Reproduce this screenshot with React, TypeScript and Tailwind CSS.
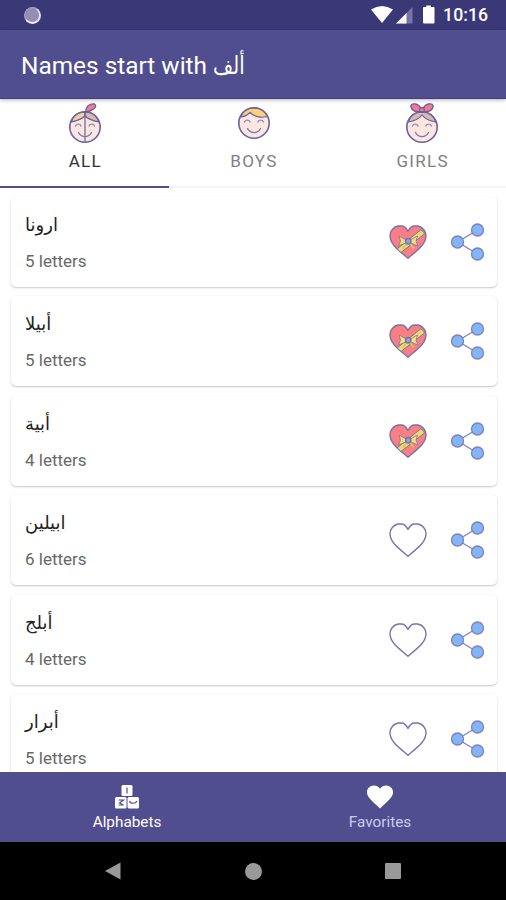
import React, { useState } from "react";

const names = [
  { name: "ارونا", letters: 5, liked: true },
  { name: "أبيلا", letters: 5, liked: true },
  { name: "أبية", letters: 4, liked: true },
  { name: "ابيلين", letters: 6, liked: false },
  { name: "أبلج", letters: 4, liked: false },
  { name: "أبرار", letters: 5, liked: false },
];

const tabs = ["ALL", "BOYS", "GIRLS"];

function Face({ type }: { type: string }) {
  return (
    <svg viewBox="0 0 36 42" width="36" height="42" fill="none" stroke="#6662a5" strokeWidth="1.6" strokeLinecap="round" strokeLinejoin="round">
      <circle cx="18" cy="25" r="15.2" fill="#fbe7e0" stroke="none" />
      {type === "BOYS" && (
        <path d="M4.500 19C7 13 12 10 18 10s11 3 13.500 8.500c-5 1.500-12.500 1-17.500-4-3 3-5 4-9.500 4.500z" fill="#fad07b" strokeWidth="1.2" />
      )}
      {type === "ALL" && (
        <>
          <path d="M4.200 20C6 14 11 10 18 10v4c-4 4-9 5-13.800 6z" fill="#f1d09a" strokeWidth="1.2" />
          <path d="M18 10c7 0 12 4 13.800 10C27 19 22 18 18 14z" fill="#dcb9aa" strokeWidth="1.2" />
          <path d="M18 10v30" strokeWidth="1.2" />
          <path d="M18.500 10c0-5 3.500-8.500 9-8 1.800 1 1.500 3-.5 4.500-2 2-4 3-8.500 3.500z" fill="#f9798c" strokeWidth="1.3" />
        </>
      )}
      {type === "GIRLS" && (
        <>
          <path d="M4.200 20C6 14 11 10 18 10s12 4 13.800 10C26 19 21 17 18 13c-3 4-8 6-13.800 7z" fill="#d9b9ad" strokeWidth="1.2" />
          <path d="M17 9.500C11 10.500 7 8 6.800 3.700 8 .8 14 1 17 6.500zM19 9.500c6 1 10-1.500 10.200-5.800C28 .8 22 1 19 6.500z" fill="#f9798c" strokeWidth="1.3" />
          <circle cx="18" cy="8" r="2.4" fill="#f9798c" strokeWidth="1.1" />
        </>
      )}
      <circle cx="18" cy="25" r="15.2" />
      <path d="M8.500 24c1-2.500 4.500-2.500 5.500 0M22 24c1-2.500 4.500-2.500 5.500 0" stroke="#9889b3" strokeWidth="1.4" />
      <path d="M11.500 30.500c3 5.500 10 5.500 13 0" stroke="#8174ad" strokeWidth="1.4" />
    </svg>
  );
}

function Heart({ liked }: { liked: boolean }) {
  return (
    <svg viewBox="0 0 40 36" width="40" height="36" fill="none" stroke="#7773ae" strokeWidth="1.4" strokeLinejoin="round">
      <path
        d="M20 7.500C18.500 4.500 16.500 2 13.500 2H10C5.500 3 2 7 2 11.500c0 4 1.500 7 4 10C9.500 25.800 15 30 20 34.200c5-4.200 10.500-8.400 14-12.700 2.500-3 4-6 4-10C38 7 34.500 3 30 2h-3.500c-3 0-5 2.500-6.500 5.500z"
        fill={liked ? "#fb7f82" : "none"}
      />
      {liked && (
        <>
          <path d="M9 25L32.500 6c2 .5 3.500 2.300 4 4L13 28.500z" fill="#eedb65" strokeWidth="1" />
          <path d="M19 16.500l-8-4.500 1.500 5.200L10.500 22l8.500-3.500zM21.500 16.500l8-4.500-1.500 5.200 2 4.800-8.500-3.500z" fill="#f5e07a" strokeWidth="0.8" />
          <path d="M18.500 19l-3.500 6M22 19l3.500 5.500" stroke="#d8c46a" strokeWidth="1.6" />
          <circle cx="20.200" cy="17.200" r="2.700" fill="#91a5d2" strokeWidth="1.500" />
        </>
      )}
    </svg>
  );
}

function Share() {
  return (
    <svg viewBox="0 0 36 40" width="36" height="40" fill="#82b5fa" stroke="#7f80b8" strokeWidth="1.3">
      <path d="M7.500 20L27.500 8M7.500 20l20 12" fill="none" />
      <circle cx="27.500" cy="8" r="6" />
      <circle cx="7.500" cy="20" r="6" />
      <circle cx="27.500" cy="32" r="6" />
    </svg>
  );
}

function StatusBar() {
  return (
    <div className="flex h-[30px] shrink-0 items-center bg-[#3b3878] pl-6 pr-[18px] text-white">
      <div className="h-[17px] w-[17px] rounded-full border border-b-2 border-r-2 border-[#a5a3c2] border-b-[#f1f0f5] border-r-[#e1e0ea] bg-[#918fb4]" />
      <svg viewBox="0 0 66 22" width="66" height="22" className="ml-auto" fill="#fff">
        <path d="M0 5.500Q11-1.500 22 5.500L11 19z" />
        <path d="M41.500 3V19.500H25z" fill="#7773a5" />
        <path d="M35.500 9V19.500H25z" />
        <path d="M53 3h2.200V1.500h4.600V3H62.500q1 0 1 1V18.500q0 1-1 1h-9.500q-1 0-1-1V4q0-1 1-1z" />
      </svg>
      <span className="ml-[6px] mt-[2px] text-[17.7px] font-medium leading-none">10:16</span>
    </div>
  );
}

function App() {
  const [activeTab, setActiveTab] = useState("ALL");
  const [liked, setLiked] = useState(names.map((item) => item.liked));

  const onLikeHandler = (index: number) => {
    setLiked(liked.map((value, i) => (i === index ? !value : value)));
  };

  return (
    <div className="flex h-[900px] w-[506px] flex-col overflow-hidden bg-white font-[Roboto,'DejaVu_Sans',sans-serif]">
      <StatusBar />
      <header className="z-10 flex h-[69px] shrink-0 items-center border-b border-[#403d80] bg-[#504e8e] pl-[21px] pt-1 text-[24.4px] text-white shadow-[0_1px_4px_rgba(0,0,0,0.3)]">
        <h1 className="whitespace-nowrap leading-8">
          Names start with <span className="inline-block origin-left scale-x-[0.8]">ألف</span>
        </h1>
      </header>

      <div className="flex h-[89px] shrink-0 border-b-2 border-[#f3f3f5]">
        {tabs.map((tab) => (
          <button
            key={tab}
            type="button"
            onClick={() => setActiveTab(tab)}
            className={
              "-mb-0.5 flex flex-1 flex-col items-center border-b-2 pl-px text-[17px] tracking-[1.3px] " +
              (tab === activeTab ? "border-[#504e8e] text-[#333]" : "border-transparent text-[#808080]")
            }
          >
            <span className={tab === "BOYS" ? "mt-[-1px]" : "mt-[3px]"}>
              <Face type={tab} />
            </span>
            <span className={tab === "BOYS" ? "mt-[11px] pl-px leading-5" : "mt-[7px] pl-px leading-5"}>{tab}</span>
          </button>
        ))}
      </div>

      <main className="flex min-h-0 flex-1 flex-col gap-[9.4px] overflow-hidden pl-[11px] pr-[9px] pt-[9px]">
        {names.map((item, index) => (
          <div
            key={item.name}
            className="flex h-[90px] shrink-0 items-center rounded-[5px] bg-white pl-[14px] pr-[11px] shadow-[0_1px_2px_rgba(0,0,0,0.22),0_0_2px_rgba(0,0,0,0.04)]"
          >
            <div className="flex flex-1 flex-col items-start pt-[2px]">
              <span className="text-[18px] leading-9 text-[#222]">{item.name}</span>
              <span className="text-[17px] leading-9 text-[#686868]">{item.letters} letters</span>
            </div>
            <button type="button" onClick={() => onLikeHandler(index)} className="mr-[22px]">
              <Heart liked={liked[index]} />
            </button>
            <button type="button">
              <Share />
            </button>
          </div>
        ))}
      </main>

      <nav className="flex h-[70px] shrink-0 bg-[#504e8e] text-[15.3px] text-white">
        <div className="flex flex-1 flex-col items-center pl-px pt-3">
          <svg viewBox="0 0 26 26" width="26" height="26" fill="#fff">
            <rect x="7.500" y="1" width="11" height="11" rx="1.500" />
            <rect x="1" y="13" width="11.500" height="11.500" rx="1.500" />
            <rect x="13.500" y="13" width="11.500" height="11.500" rx="1.500" />
            <path d="M13 3.500v6M4.500 16h5l-4 3 4 2h-5M15.500 17c1 3 6 3 7.500 0" fill="none" stroke="#504e8e" strokeWidth="1.200" />
          </svg>
          <span className="leading-6">Alphabets</span>
        </div>
        <div className="flex flex-1 flex-col items-center pl-px pt-3">
          <svg viewBox="0 0 26 26" width="26" height="26" fill="#fff">
            <path d="M13 24.500L10.500 22C4 16 0 12.500 0 8.200 0 4.500 2.800 1.500 6.800 1.500c2.500 0 4.700 1.200 6.200 3.200 1.500-2 3.700-3.200 6.200-3.200 4 0 6.800 3 6.800 6.700 0 4.300-4 7.800-10.500 13.800z" />
          </svg>
          <span className="leading-6 text-[#cbcaf0]">Favorites</span>
        </div>
      </nav>

      <div className="flex h-[58px] shrink-0 items-center justify-between bg-black px-[105px]">
        <svg viewBox="0 0 16 18" width="16" height="18" fill="#999">
          <path d="M0 9L15.500.5v17z" />
        </svg>
        <div className="h-[17px] w-[17px] rounded-full bg-[#999]" />
        <div className="h-4 w-4 rounded-[1px] bg-[#999]" />
      </div>
    </div>
  );
}

export default App;
